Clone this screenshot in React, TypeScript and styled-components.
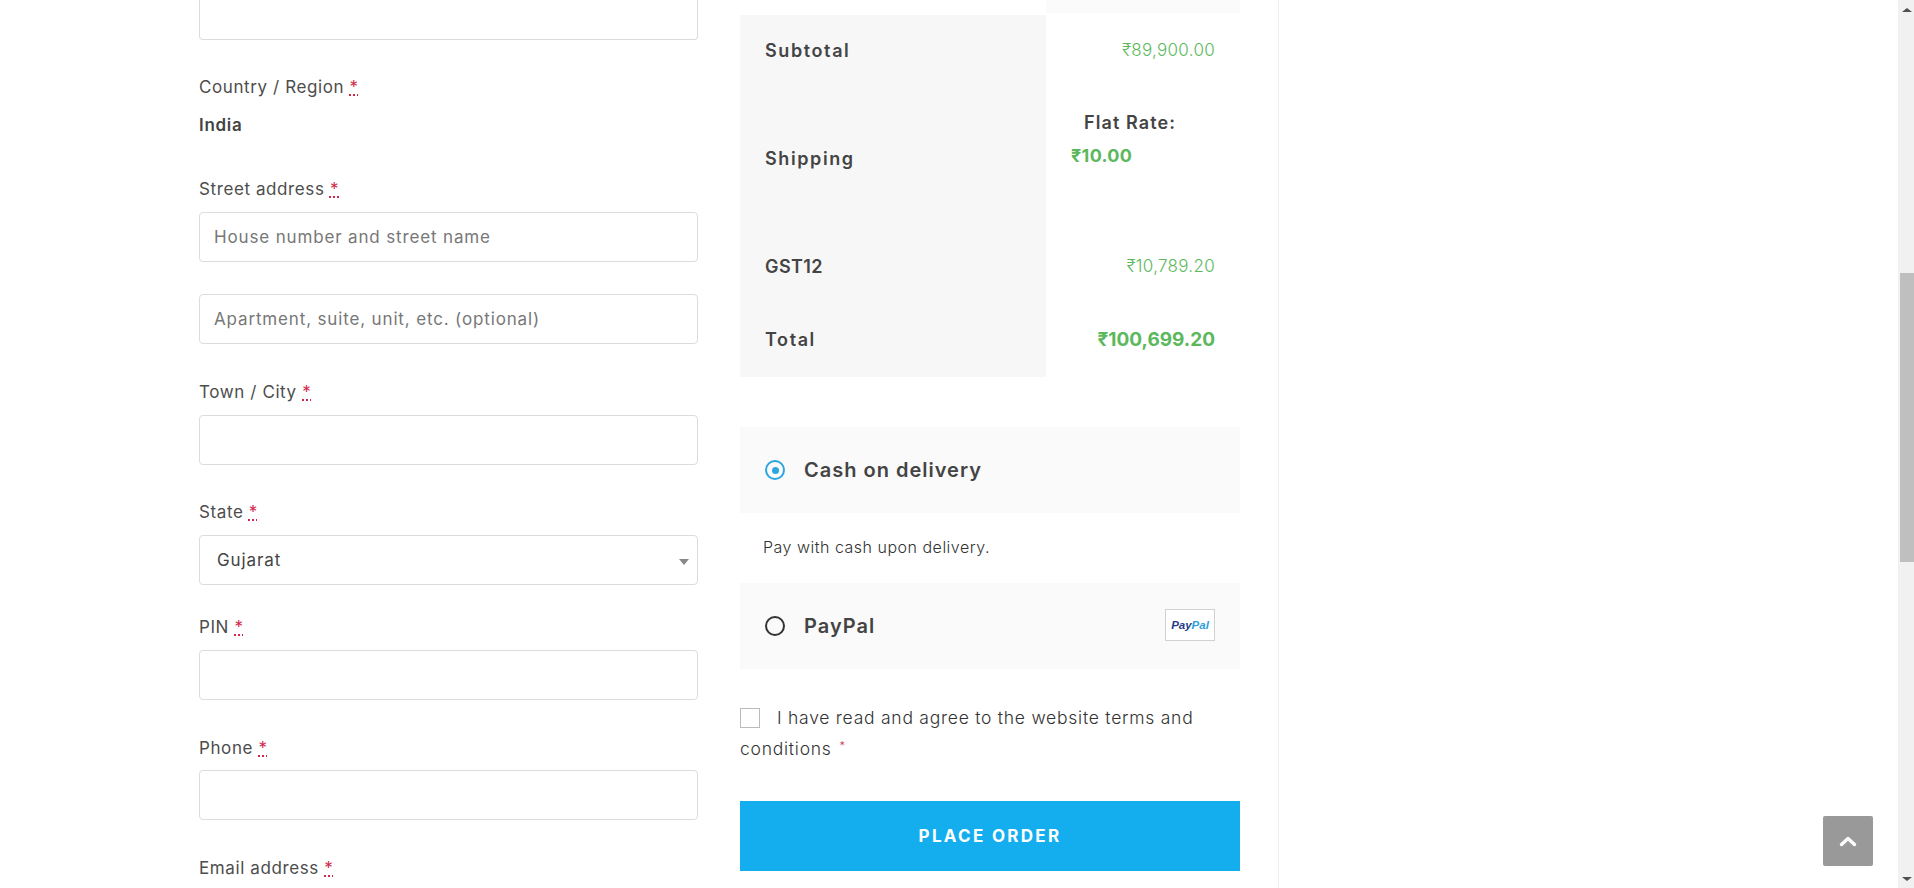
import React from "react";
import styled, { createGlobalStyle } from "styled-components";

const GlobalStyle = createGlobalStyle`
  html, body {
    margin: 0;
    padding: 0;
    height: 100%;
    overflow: hidden;
    background: #fff;
  }
  * {
    box-sizing: border-box;
  }
  body {
    font-family: Inter, "Noto Sans", sans-serif;
    color: #4a4a4a;
  }
`;

const Field = ({ label, mb, gap, children }: { label: string; mb?: number; gap?: number; children: React.ReactNode }) => (
  <FieldWrap mb={mb}>
    <Label gap={gap}>
      {label} <Req title="required">*</Req>
    </Label>
    {children}
  </FieldWrap>
);

const App = () => {
  return (
    <Page>
      <GlobalStyle />
      <Main>
        <Content>
          <LeftColumn>
            <CutInput />
            <FieldWrap mb={40}>
              <Label gap={14}>
                Country / Region <Req title="required">*</Req>
              </Label>
              <Country>India</Country>
            </FieldWrap>
            <FieldWrap mb={32}>
              <Label>
                Street address <Req title="required">*</Req>
              </Label>
              <TextInput placeholder="House number and street name" readOnly />
            </FieldWrap>
            <FieldWrap mb={36}>
              <TextInput placeholder="Apartment, suite, unit, etc. (optional)" readOnly />
            </FieldWrap>
            <Field label="Town / City">
              <TextInput readOnly />
            </Field>
            <Field label="State" mb={30}>
              <SelectBox>
                Gujarat
                <Caret />
              </SelectBox>
            </Field>
            <Field label="PIN" mb={36}>
              <TextInput readOnly />
            </Field>
            <Field label="Phone" mb={36} gap={10}>
              <TextInput readOnly />
            </Field>
            <Field label="Email address">
              <TextInput readOnly />
            </Field>
          </LeftColumn>

          <RightColumn>
            <TopStrip />
            <Totals>
              <tbody>
                <tr>
                  <RowHead h={70}>Subtotal</RowHead>
                  <Amount>₹89,900.00</Amount>
                </tr>
                <tr>
                  <RowHead h={146}>Shipping</RowHead>
                  <ShippingCell>
                    <FlatRate>Flat Rate:</FlatRate>
                    <ShippingPrice>₹10.00</ShippingPrice>
                  </ShippingCell>
                </tr>
                <tr>
                  <RowHead h={70} spacing={0.4}>
                    GST12
                  </RowHead>
                  <Amount>₹10,789.20</Amount>
                </tr>
                <tr>
                  <RowHead h={76}>Total</RowHead>
                  <TotalAmount>₹100,699.20</TotalAmount>
                </tr>
              </tbody>
            </Totals>

            <PaymentBox>
              <Radio checked />
              <PaymentName>Cash on delivery</PaymentName>
            </PaymentBox>
            <PaymentNote>Pay with cash upon delivery.</PaymentNote>
            <PaymentBox>
              <Radio />
              <PaymentName>PayPal</PaymentName>
              <PayPalLogo>
                <b>Pay</b>
                <i>Pal</i>
              </PayPalLogo>
            </PaymentBox>

            <Terms>
              <CheckBox />I have read and agree to the website terms and conditions
              <TermsStar>*</TermsStar>
            </Terms>
            <PlaceOrder>PLACE ORDER</PlaceOrder>
          </RightColumn>
        </Content>
      </Main>

      <Scrollbar>
        <ArrowUp />
        <Thumb />
        <ArrowDown />
      </Scrollbar>

      <BackToTop>
        <svg width="18" height="12" viewBox="0 0 18 12" fill="none">
          <path d="M2.5 9.5 L9 3.5 L15.5 9.5" stroke="#fff" strokeWidth="3.4" strokeLinecap="round" strokeLinejoin="round" />
        </svg>
      </BackToTop>
    </Page>
  );
};

export default App;

const Page = styled.div`
  display: flex;
  width: 1914px;
  height: 888px;
  overflow: hidden;
`;

const Main = styled.div`
  flex: 1;
  min-width: 0;
`;

const Content = styled.div`
  display: flex;
  gap: 42px;
  width: 1279px;
  height: 888px;
  padding-left: 199px;
  border-right: 1px solid #eeeeee;
`;

const LeftColumn = styled.div`
  width: 499px;
  flex-shrink: 0;
`;

const RightColumn = styled.div`
  width: 500px;
  flex-shrink: 0;
`;

const FieldWrap = styled.div<{ mb?: number }>`
  margin-bottom: ${({ mb }) => mb ?? 35}px;
`;

const Label = styled.label<{ gap?: number }>`
  display: block;
  font-size: 17px;
  line-height: 24px;
  letter-spacing: 0.6px;
  margin-bottom: ${({ gap }) => gap ?? 11}px;
  color: #4d4d4d;
`;

const Req = styled.abbr`
  color: #d1274b;
  text-decoration: underline dotted #d1274b;
  text-decoration-thickness: 1.5px;
`;

const Country = styled.strong`
  display: block;
  font-size: 17px;
  line-height: 24px;
  font-weight: 600;
  letter-spacing: 0.7px;
  color: #444;
`;

const TextInput = styled.input`
  display: block;
  width: 100%;
  height: 50px;
  padding: 0 14px;
  border: 1px solid #dcdcdc;
  border-radius: 4px;
  outline: none;
  background: #fff;
  font-family: inherit;
  font-size: 17px;
  letter-spacing: 0.85px;
  color: #444;

  &::placeholder {
    color: #777;
    opacity: 1;
  }
`;

const CutInput = styled.div`
  height: 40px;
  margin-bottom: 35px;
  border: 1px solid #dcdcdc;
  border-top: none;
  border-radius: 0 0 4px 4px;
`;

const SelectBox = styled.div`
  position: relative;
  display: flex;
  align-items: center;
  height: 50px;
  padding-left: 17px;
  border: 1px solid #dcdcdc;
  border-radius: 4px;
  font-size: 17px;
  letter-spacing: 0.9px;
  color: #444;
`;

const Caret = styled.span`
  position: absolute;
  right: 8px;
  top: 23px;
  border-left: 5px solid transparent;
  border-right: 5px solid transparent;
  border-top: 6px solid #888;
`;

const TopStrip = styled.div`
  height: 13px;
  margin: 0 0 2px 306px;
  background: #fbfbfb;
`;

const Totals = styled.table`
  width: 100%;
  border-collapse: collapse;
  margin-bottom: 50px;
`;

const RowHead = styled.th<{ h: number; spacing?: number }>`
  width: 306px;
  height: ${({ h }) => h}px;
  padding: 0 0 0 25px;
  background: #f7f7f7;
  text-align: left;
  font-size: 18px;
  font-weight: 600;
  letter-spacing: ${({ spacing }) => spacing ?? 1.6}px;
  color: #444;
`;

const Amount = styled.td`
  padding: 0 25px 0 0;
  text-align: right;
  font-size: 17px;
  font-weight: 300;
  letter-spacing: 0.3px;
  color: #5cb85c;
`;

const TotalAmount = styled(Amount)`
  font-size: 19px;
  font-weight: 700;
  letter-spacing: 0;
`;

const ShippingCell = styled.td`
  padding: 0 0 0 25px;
  text-align: left;
`;

const FlatRate = styled.div`
  padding-left: 13px;
  font-size: 18px;
  line-height: 33px;
  font-weight: 600;
  letter-spacing: 1.1px;
  color: #444;
`;

const ShippingPrice = styled.div`
  margin-bottom: 39px;
  font-size: 18px;
  line-height: 33px;
  font-weight: 700;
  letter-spacing: 0.3px;
  color: #5cb85c;
`;

const PaymentBox = styled.div`
  display: flex;
  align-items: center;
  height: 86px;
  padding: 0 25px;
  background: #fafafa;
`;

const Radio = styled.span<{ checked?: boolean }>`
  position: relative;
  width: 20px;
  height: 20px;
  margin-right: 19px;
  border-radius: 50%;
  border: 2px solid ${({ checked }) => (checked ? "#2ba6e1" : "#333")};

  &::after {
    content: "";
    display: ${({ checked }) => (checked ? "block" : "none")};
    position: absolute;
    left: 4.5px;
    top: 4.5px;
    width: 7px;
    height: 7px;
    border-radius: 50%;
    background: #2ba6e1;
  }
`;

const PaymentName = styled.span`
  flex: 1;
  font-size: 20px;
  font-weight: 600;
  letter-spacing: 1px;
  color: #444;
`;

const PaymentNote = styled.p`
  margin: 0;
  height: 70px;
  padding-left: 23px;
  font-size: 16px;
  line-height: 68px;
  font-weight: 300;
  letter-spacing: 0.5px;
  color: #333;
`;

const PayPalLogo = styled.span`
  display: flex;
  align-items: center;
  justify-content: center;
  width: 50px;
  height: 32px;
  margin-top: -2px;
  background: #fff;
  border: 1.5px solid #d2d2d2;
  font-family: "Liberation Sans", sans-serif;
  font-size: 11.5px;
  font-weight: 700;
  font-style: italic;

  b {
    color: #1f3c88;
  }

  i {
    color: #2a9fdc;
  }
`;

const Terms = styled.div`
  margin: 33px 0 37px;
  font-size: 17.5px;
  line-height: 31px;
  font-weight: 300;
  letter-spacing: 0.75px;
  color: #333;
`;

const CheckBox = styled.span`
  display: inline-block;
  width: 20px;
  height: 20px;
  margin-right: 17px;
  vertical-align: -4px;
  background: #fff;
  border: 1px solid #bbb;
`;

const TermsStar = styled.span`
  margin-left: 8px;
  font-size: 11px;
  line-height: 0;
  vertical-align: 5px;
  color: #d1274b;
`;

const PlaceOrder = styled.button`
  display: block;
  width: 100%;
  height: 70px;
  border: none;
  background: #14aeef;
  color: #fff;
  font-family: inherit;
  font-size: 17px;
  font-weight: 700;
  letter-spacing: 2.3px;
`;

const Scrollbar = styled.div`
  display: flex;
  flex-direction: column;
  width: 16px;
  height: 888px;
  padding-left: 2px;
  background: #f1f1f1;
`;

const ArrowUp = styled.span`
  align-self: center;
  margin-top: 8px;
  border-left: 5px solid transparent;
  border-right: 5px solid transparent;
  border-bottom: 4px solid #505050;
`;

const ArrowDown = styled.span`
  align-self: center;
  margin-top: auto;
  margin-bottom: 7px;
  border-left: 5px solid transparent;
  border-right: 5px solid transparent;
  border-top: 4px solid #505050;
`;

const Thumb = styled.div`
  height: 289px;
  margin-top: 261px;
  background: #bfbfbf;
`;

const BackToTop = styled.button`
  position: fixed;
  left: 1823px;
  top: 816px;
  display: flex;
  align-items: center;
  justify-content: center;
  width: 50px;
  height: 50px;
  padding: 0;
  border: none;
  border-radius: 2px;
  background: #999;
  color: #fff;
`;
